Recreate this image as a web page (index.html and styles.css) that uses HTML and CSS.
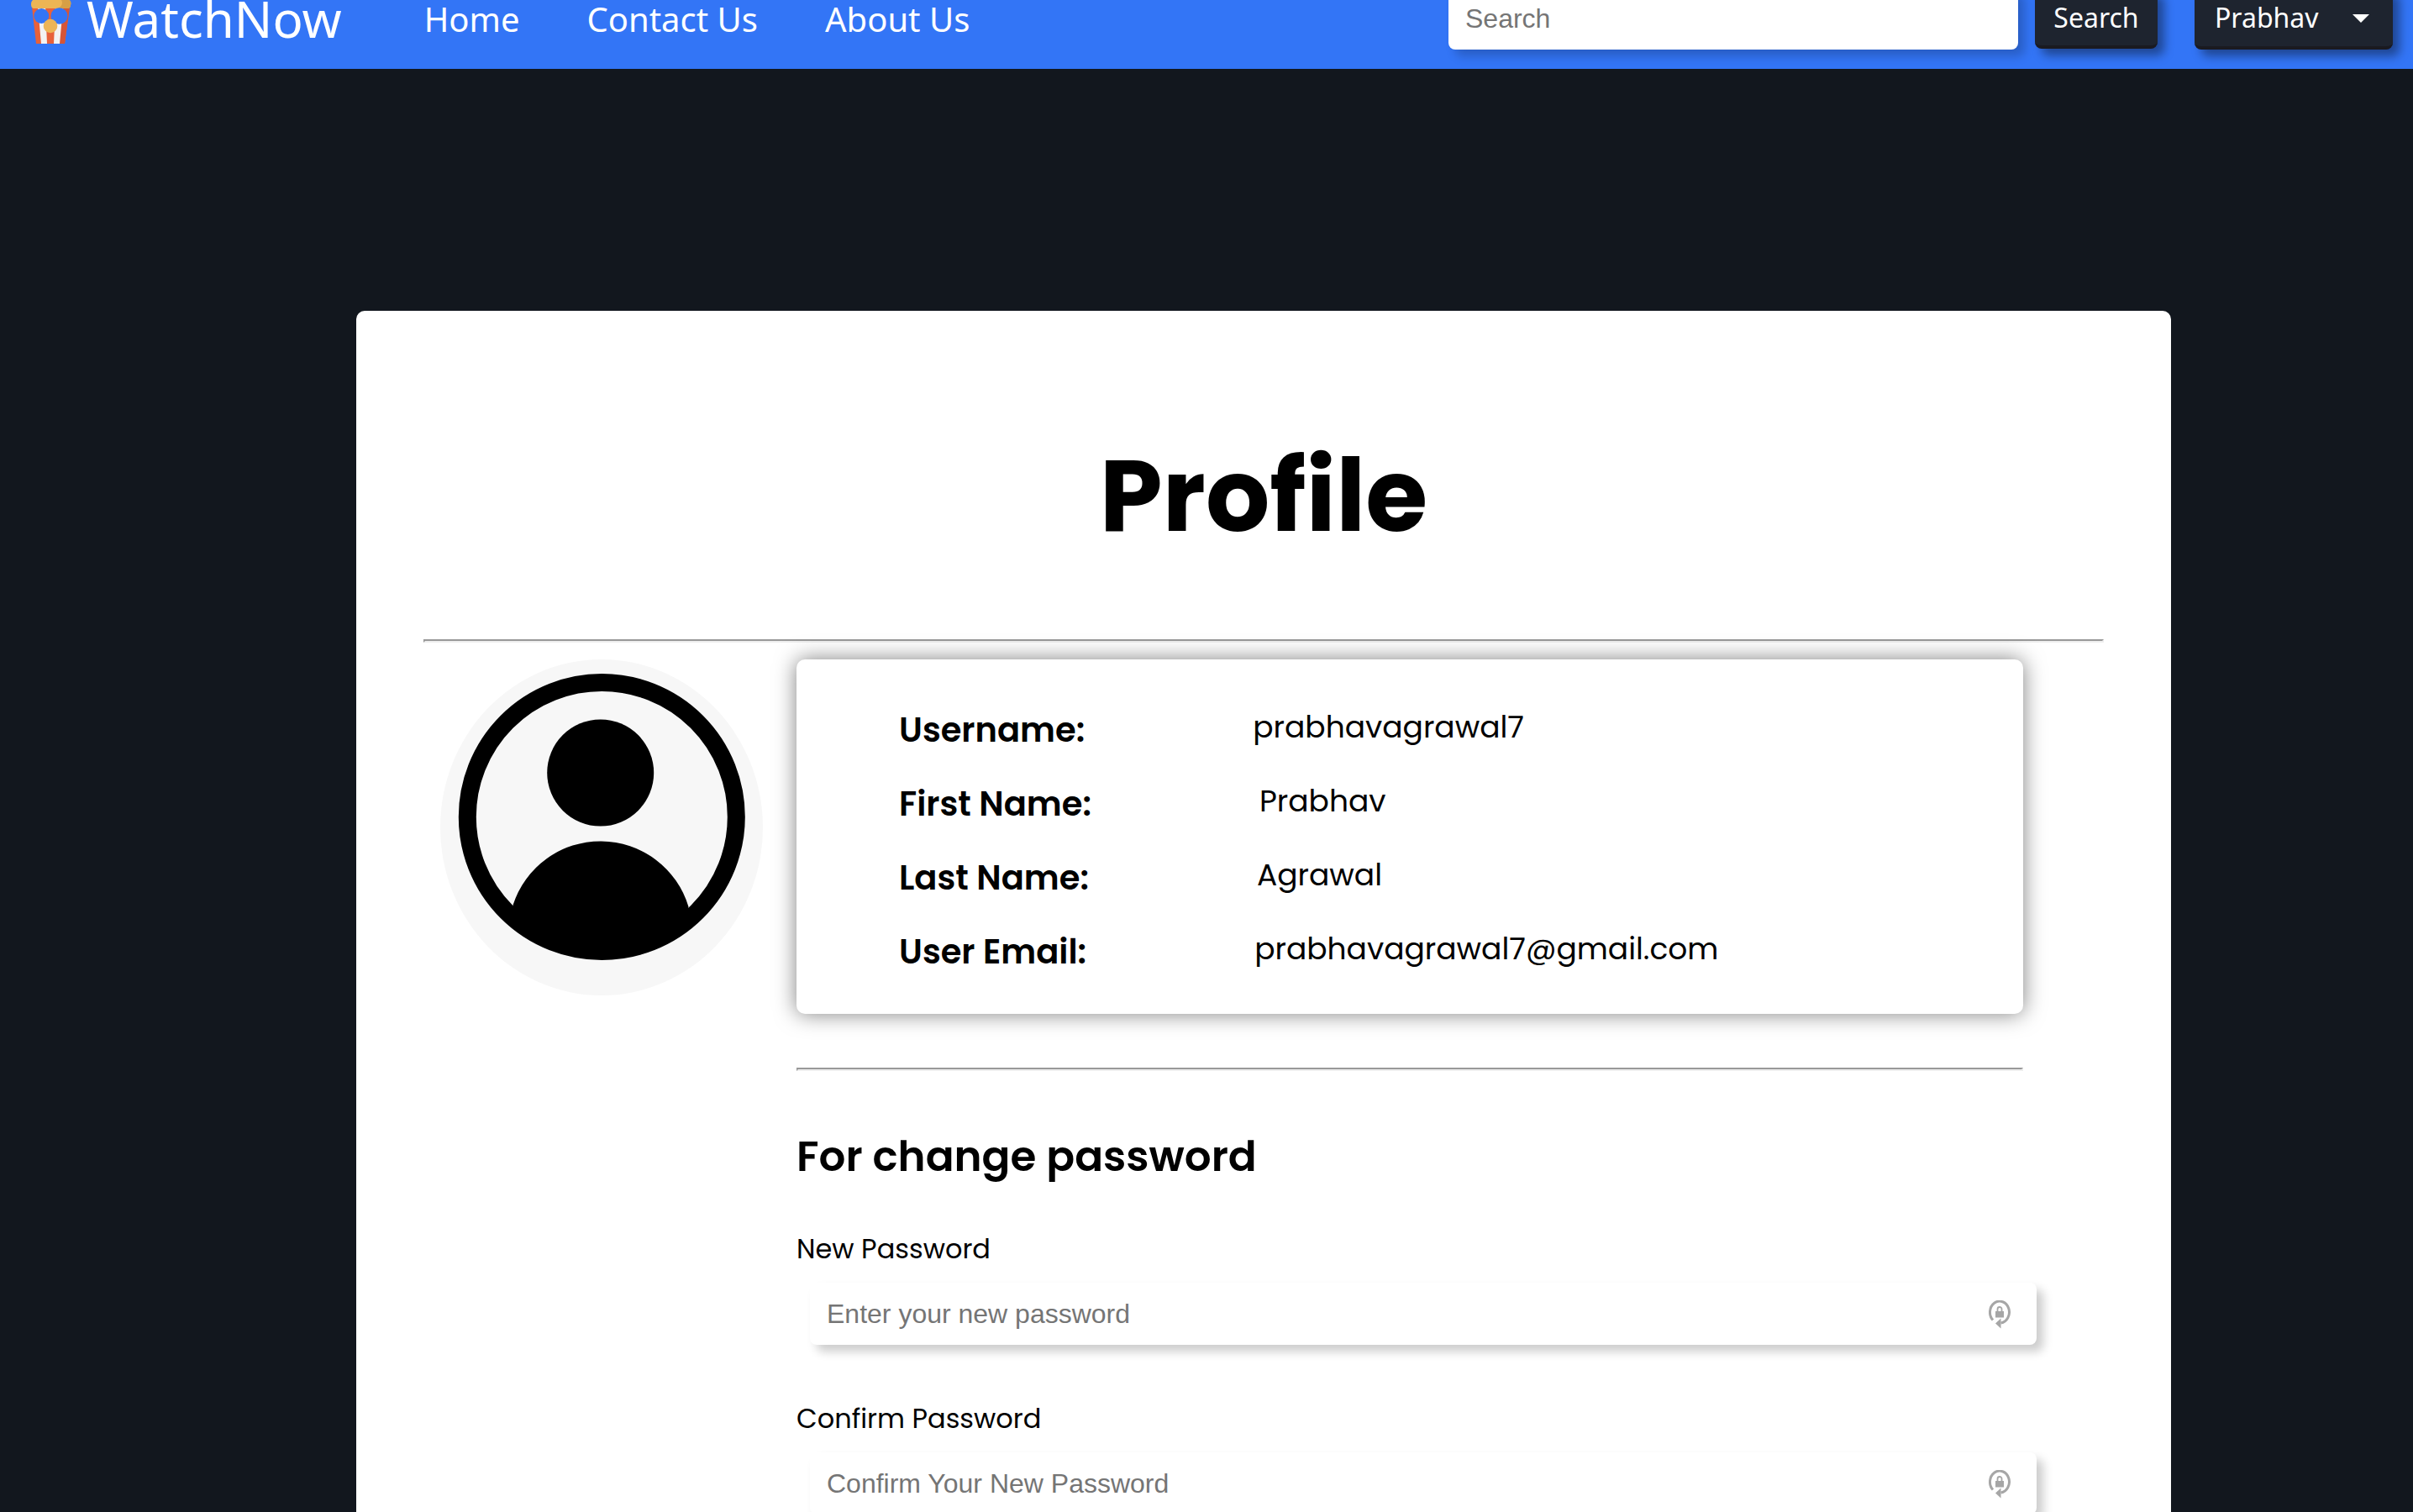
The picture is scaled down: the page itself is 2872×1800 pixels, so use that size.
FILE: index.html
```html
<!DOCTYPE html>
<html lang="en">
<head>
<meta charset="utf-8">
<title>WatchNow - Profile</title>
<link rel="stylesheet" href="styles.css">
</head>
<body>
<header class="navbar">
  <a class="brand" href="#">
    <svg class="brand-icon" viewBox="0 0 48 60" aria-hidden="true">
      <path fill="#e8613a" d="M1 16h45l-6 44H6z"/>
      <path fill="#d65537" d="M39 16h7l-6 44h-6z"/>
      <path fill="#f3f2f2" d="M8 16h9l2 44h-7zM29 16h9l-4 44h-7z"/>
      <path fill="#edb555" d="M0 13c0-5 4-6 4-6C6 0 14-2 18 1c5-3 12-2 15 1 7-1 9 2 10 5 4 1 5 4 4 7 0 3-2 4-4 4H4c-3 0-4-2-4-5z"/>
      <path fill="#d79f46" d="M34 2c5 0 8 2 9 5 4 1 5 4 4 7 0 3-2 4-4 4H32c5-2 6-7 4-10z"/>
      <ellipse cx="12.300" cy="27" rx="9" ry="9" fill="#3375f6"/>
      <ellipse cx="33.500" cy="27" rx="10" ry="9.800" fill="#3375f6"/>
      <circle cx="23" cy="39" r="8.300" fill="#edb555"/>
    </svg>
    <span>WatchNow</span>
  </a>
  <nav class="nav-links">
    <a href="#">Home</a>
    <a href="#">Contact Us</a>
    <a href="#">About Us</a>
  </nav>
  <form class="search" role="search">
    <input class="field search-field" type="search" placeholder="Search" aria-label="Search">
    <button class="btn" type="submit">Search</button>
  </form>
  <button class="btn user-menu" type="button" aria-haspopup="menu">Prabhav <span class="caret"></span></button>
</header>

<main class="card">
  <h1>Profile</h1>
  <hr>
  <div class="profile">
    <svg class="avatar" viewBox="0 0 384 400" role="img" aria-label="Profile picture">
      <ellipse cx="192" cy="200" rx="192" ry="200" fill="#f7f7f7"/>
      <circle cx="192.300" cy="187.500" r="160" fill="none" stroke="#000" stroke-width="21"/>
      <circle cx="190.700" cy="135" r="63.500"/>
      <path d="M86.500 292.500A109.400 109.400 0 0 1 295.500 294.500L290 320A165 165 0 0 1 92 320z"/>
    </svg>
    <div class="details">
      <dl class="info">
        <div><dt>Username:</dt><dd>prabhavagrawal7</dd></div>
        <div><dt>First Name:</dt><dd>Prabhav</dd></div>
        <div><dt>Last Name:</dt><dd>Agrawal</dd></div>
        <div><dt>User Email:</dt><dd>prabhavagrawal7@gmail.com</dd></div>
      </dl>
      <hr>
      <form class="password-form">
        <h2>For change password</h2>
        <label for="new-password">New Password</label>
        <div class="password-field">
          <input class="field" id="new-password" type="password" placeholder="Enter your new password">
          <svg class="lock" viewBox="0 0 26 34" aria-hidden="true">
            <path d="M5 23.500A11.500 13 0 1 1 14.500 27" fill="none" stroke="#a6a6a6" stroke-width="3"/>
            <path d="M8 27.500l6.500-6v12z" fill="#a6a6a6"/>
            <path d="M8 13h10v7.500H8z" fill="#a6a6a6"/>
            <path d="M10.500 13.500v-3a2.500 2.500 0 0 1 5 0v3" fill="none" stroke="#a6a6a6" stroke-width="1.800"/>
          </svg>
        </div>
        <label for="confirm-password">Confirm Password</label>
        <div class="password-field">
          <input class="field" id="confirm-password" type="password" placeholder="Confirm Your New Password">
          <svg class="lock" viewBox="0 0 26 34" aria-hidden="true">
            <path d="M5 23.500A11.500 13 0 1 1 14.500 27" fill="none" stroke="#a6a6a6" stroke-width="3"/>
            <path d="M8 27.500l6.500-6v12z" fill="#a6a6a6"/>
            <path d="M8 13h10v7.500H8z" fill="#a6a6a6"/>
            <path d="M10.500 13.500v-3a2.500 2.500 0 0 1 5 0v3" fill="none" stroke="#a6a6a6" stroke-width="1.800"/>
          </svg>
        </div>
      </form>
    </div>
  </div>
</main>
</body>
</html>
```
FILE: styles.css
```css
* {
  box-sizing: border-box;
}

html {
  overflow: hidden;
}

body {
  margin: 0;
  background: #12171e;
  color: #000;
  font-family: Poppins, Inter, "Open Sans", sans-serif;
  font-size: 32px;
}

/* Header bar, partly tucked above the top edge */
.navbar {
  display: flex;
  align-items: center;
  height: 120px;
  margin-top: -38px;
  padding: 0 24px 0 37px;
  background: #3375f6;
  color: #fff;
  font-family: "Noto Sans", sans-serif;
}

.navbar a {
  color: inherit;
  text-decoration: none;
}

.brand {
  display: flex;
  align-items: center;
  gap: 18px;
  font-size: 60px;
  line-height: 44px;
}

.brand-icon {
  width: 48px;
  height: 60px;
}

.nav-links {
  display: flex;
  gap: 80px;
  margin-left: 98px;
  font-size: 40px;
}

.search {
  display: flex;
  align-items: center;
  gap: 20px;
  margin-left: auto;
}

.field {
  height: 74px;
  padding: 0 20px;
  border: 0;
  border-radius: 8px;
  background: #fff;
  box-shadow: 8px 8px 12px rgba(0, 0, 0, 0.2);
  font-family: "Liberation Sans", Arial, sans-serif;
  font-size: 32px;
}

.field::placeholder {
  color: #757575;
}

.search-field {
  width: 678px;
}

.btn {
  width: 146px;
  height: 72px;
  padding: 0;
  border: 0;
  border-bottom: 4px solid #1a1a20;
  border-radius: 8px;
  background: #1e242f;
  box-shadow: 8px 8px 12px rgba(0, 0, 0, 0.4);
  color: #fff;
  font-family: inherit;
  font-size: 32px;
}

.user-menu {
  display: flex;
  align-items: center;
  justify-content: space-between;
  width: 236px;
  height: 74px;
  margin-left: 44px;
  padding: 0 28px 0 24px;
}

.caret {
  margin-top: 4px;
  border: 10px solid transparent;
  border-top-color: #fff;
  border-bottom: 0;
}

/* Profile card */
.card {
  margin: 288px 288px 0 424px;
  padding: 80px;
  border-radius: 10px;
  background: #fff;
}

h1 {
  margin: 50px 0 81px;
  font-size: 120px;
  line-height: 180px;
  text-align: center;
}

hr {
  margin: 0;
  border: 2px solid;
  border-color: #999 #eee #eee #999;
}

.profile {
  display: flex;
  align-items: flex-start;
  gap: 40px;
  padding: 20px 96px 0 20px;
}

.avatar {
  flex: none;
  width: 384px;
  height: 400px;
}

.details {
  flex: 1;
}

.info {
  margin: 0 0 64px;
  padding: 40px 122px 30px;
  border-radius: 10px;
  box-shadow: 0 0 26px rgba(0, 0, 0, 0.5);
}

.info div {
  display: flex;
  gap: 200px;
  height: 88px;
}

.info dt {
  font-size: 40px;
  font-weight: 600;
  line-height: 88px;
}

.info dd {
  margin: 0;
  font-size: 36px;
  line-height: 82px;
}

h2 {
  margin: 63px 0 47px;
  font-size: 50px;
  font-weight: 600;
  line-height: 78px;
}

label {
  display: block;
  line-height: 48px;
}

.password-field {
  position: relative;
  margin: 16px -16px 64px 16px;
}

.password-field .field {
  width: 100%;
}

.lock {
  position: absolute;
  top: 21px;
  right: 31px;
  width: 26px;
  height: 34px;
}
```
